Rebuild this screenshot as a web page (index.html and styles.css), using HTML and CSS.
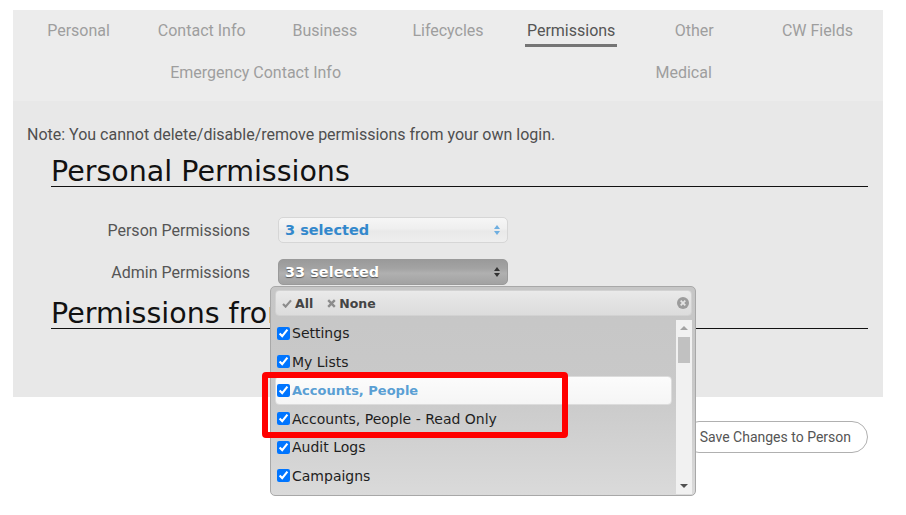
FILE: index.html
```html
<!DOCTYPE html>
<html lang="en">
<head>
<meta charset="utf-8">
<title>Permissions</title>
<link rel="stylesheet" href="styles.css">
</head>
<body>
<div class="panel">
  <nav class="tabs">
    <div class="tab-row tab-row-main">
      <a class="tab"><span>Personal</span></a>
      <a class="tab"><span>Contact Info</span></a>
      <a class="tab"><span>Business</span></a>
      <a class="tab"><span>Lifecycles</span></a>
      <a class="tab active"><span>Permissions</span></a>
      <a class="tab"><span>Other</span></a>
      <a class="tab"><span>CW Fields</span></a>
    </div>
    <div class="tab-row tab-row-extra">
      <a class="tab"><span>Emergency Contact Info</span></a>
      <a class="tab"><span>Medical</span></a>
    </div>
  </nav>
  <div class="content">
    <p class="note">Note: You cannot delete/disable/remove permissions from your own login.</p>
    <h2 class="section-title">Personal Permissions</h2>
    <div class="form-grid">
      <label class="field-label">Person Permissions</label>
      <div class="ms-wrap">
        <button class="ms"><span>3 selected</span>
          <svg class="ms-arrows" width="6" height="10" viewBox="0 0 6 10"><path d="M0 4 L3 0 L6 4 Z M0 6 L3 10 L6 6 Z" fill="#6eaee0"/></svg>
        </button>
      </div>
      <label class="field-label">Admin Permissions</label>
      <div class="ms-wrap">
        <button class="ms ms-open"><span>33 selected</span>
          <svg class="ms-arrows" width="6" height="10" viewBox="0 0 6 10"><path d="M0 4 L3 0 L6 4 Z M0 6 L3 10 L6 6 Z" fill="#333"/></svg>
        </button>
        <div class="ms-menu">
          <div class="ms-header">
            <div class="ms-links">
              <span class="ms-link">
                <svg width="10" height="9" viewBox="0 0 10 9"><path d="M1 5 L3.6 7.6 L9 1.4" fill="none" stroke="#8c8c8c" stroke-width="2.2"/></svg>
                All
              </span>
              <span class="ms-link">
                <svg width="9" height="9" viewBox="0 0 9 9"><path d="M1.2 1.2 L7.8 7.8 M7.8 1.2 L1.2 7.8" fill="none" stroke="#8c8c8c" stroke-width="2.4"/></svg>
                None
              </span>
            </div>
            <svg class="ms-close" width="12" height="12" viewBox="0 0 12 12"><circle cx="6" cy="6" r="6" fill="#9c9c9c"/><path d="M3.7 3.7 L8.3 8.3 M8.3 3.7 L3.7 8.3" stroke="#e4e4e4" stroke-width="1.8"/></svg>
          </div>
          <div class="ms-body">
            <ul class="ms-list">
              <li class="ms-item"><input type="checkbox" checked><span>Settings</span></li>
              <li class="ms-item"><input type="checkbox" checked><span>My Lists</span></li>
              <li class="ms-item hover"><input type="checkbox" checked><span>Accounts, People</span></li>
              <li class="ms-item"><input type="checkbox" checked><span>Accounts, People - Read Only</span></li>
              <li class="ms-item"><input type="checkbox" checked><span>Audit Logs</span></li>
              <li class="ms-item"><input type="checkbox" checked><span>Campaigns</span></li>
            </ul>
            <div class="scrollbar">
              <div class="sb-btn"><span class="tri-up"></span></div>
              <div class="sb-track"><div class="sb-thumb"></div></div>
              <div class="sb-btn"><span class="tri-down"></span></div>
            </div>
          </div>
        </div>
      </div>
    </div>
    <h2 class="section-title"><span class="clip">Permissions from Groups</span></h2>
  </div>
</div>
<div class="actions">
  <button class="save-btn">Save Changes to Person</button>
</div>
<div class="annotation"></div>
</body>
</html>
```

FILE: styles.css
```css
* { box-sizing: border-box; }

body {
  margin: 0;
  background: #fff;
  font-family: Roboto, "Liberation Sans", sans-serif;
  position: relative;
  width: 906px;
  height: 515px;
  overflow: hidden;
}

.panel {
  margin: 10px 0 0 13px;
  width: 870px;
}

/* Tabs */
.tabs {
  background: #ececec;
  padding-top: 9px;
  height: 91px;
}

.tab-row {
  height: 42px;
}

.tab-row-main {
  display: grid;
  grid-template-columns: repeat(7, 1fr);
  padding: 0 4px;
}

.tab-row-extra {
  display: flex;
  justify-content: space-around;
  padding-right: 14px;
}

.tab {
  text-align: center;
  font-size: 16px;
  line-height: 24px;
  color: #9e9e9e;
}

.tab span {
  display: inline-block;
}

.tab.active {
  color: #555;
}

.tab.active span {
  padding: 0 2px 1px;
  border-bottom: 3px solid #757575;
  background-clip: content-box;
}

/* Content */
.content {
  background: #e8e8e8;
  padding: 24px 15px 68px 14px;
}

.note {
  margin: 0;
  font-size: 16px;
  line-height: 20px;
  color: #4f4f4f;
}

.section-title {
  margin: 13px 0 0 24px;
  font-family: "DejaVu Sans", sans-serif;
  font-weight: normal;
  font-size: 28.5px;
  line-height: 28px;
  color: #111;
  border-bottom: 1px solid #111;
  white-space: nowrap;
}

.clip {
  display: block;
  width: 219px;
  overflow: hidden;
}

.form-grid {
  margin: 30px 0 15px 24px;
  display: grid;
  grid-template-columns: 199px 230px;
  column-gap: 28px;
  row-gap: 16px;
  align-items: center;
}

.field-label {
  text-align: right;
  font-size: 16px;
  color: #555;
}

.ms-wrap {
  position: relative;
}

.ms {
  width: 230px;
  height: 26px;
  display: flex;
  align-items: center;
  justify-content: space-between;
  padding: 0 7px 0 6px;
  border: 1px solid #d6d6d6;
  border-radius: 5px;
  background: linear-gradient(#f6f6f6, #efefef 45%, #e9e9e9 55%, #eeeeee);
  font-family: "DejaVu Sans", sans-serif;
  font-weight: bold;
  font-size: 14.5px;
  color: #3388cc;
  cursor: pointer;
}

.ms-open {
  border-color: #9a9a9a;
  background: linear-gradient(#9a9a9a, #a3a3a3 35%, #b0b0b0 55%, #a2a2a2);
  color: #fff;
  text-shadow: 0 1px 1px #555;
}

/* Dropdown menu */
.ms-menu {
  position: absolute;
  left: -8px;
  top: 27px;
  width: 426px;
  height: 210px;
  z-index: 5;
  border: 1px solid #a8a8a8;
  border-radius: 5px;
  padding: 3px 3px 0 4px;
  background: linear-gradient(#c6c6c6, #c9c9c9 50%, #dadada);
  font-family: "DejaVu Sans", sans-serif;
}

.ms-header {
  height: 26px;
  display: flex;
  align-items: center;
  justify-content: space-between;
  padding: 0 2px 0 6px;
  border: 1px solid #d2d2d2;
  border-radius: 4px;
  background: linear-gradient(#eaeaea, #e2e2e2 50%, #dcdcdc);
}

.ms-links {
  display: flex;
  gap: 14px;
}

.ms-link {
  display: flex;
  align-items: center;
  gap: 3px;
  font-weight: bold;
  font-size: 12.5px;
  color: #444;
}

.ms-body {
  display: flex;
  gap: 4px;
  margin-top: 3px;
  height: 176px;
}

.ms-list {
  list-style: none;
  margin: 0;
  padding: 0;
  width: 397px;
}

.ms-item {
  height: 28.5px;
  display: flex;
  align-items: center;
  gap: 2px;
  padding-left: 1px;
  border: 1px solid transparent;
  border-radius: 4px;
  font-size: 14px;
  color: #1e1e1e;
}

.ms-item input {
  margin: 0;
  width: 13px;
  height: 13px;
}

.ms-item.hover {
  background: linear-gradient(#fcfcfc, #f5f5f5);
  border-color: #dcdcdc;
  color: #5a9fd4;
  font-weight: bold;
  font-size: 13px;
}

.scrollbar {
  width: 16px;
  margin-top: 1px;
  height: 174px;
  background: #f1f1f1;
  display: flex;
  flex-direction: column;
}

.sb-btn {
  height: 16px;
  display: flex;
  align-items: center;
  justify-content: center;
}

.sb-track {
  flex: 1;
  padding: 1px 2px 0;
}

.sb-thumb {
  height: 26px;
  background: #c1c1c1;
}

.tri-up {
  width: 0;
  height: 0;
  border-left: 4px solid transparent;
  border-right: 4px solid transparent;
  border-bottom: 4px solid #a3a3a3;
}

.tri-down {
  width: 0;
  height: 0;
  border-left: 4px solid transparent;
  border-right: 4px solid transparent;
  border-top: 4px solid #505050;
}

/* Actions */
.actions {
  display: flex;
  justify-content: flex-end;
  padding-right: 38px;
  margin-top: 24px;
}

.save-btn {
  height: 32px;
  padding: 0 16px;
  border: 1px solid #b0b0b0;
  border-radius: 16px;
  background: #fff;
  font-family: Roboto, "Liberation Sans", sans-serif;
  font-size: 14px;
  color: #555;
}

/* Red annotation box */
.annotation {
  position: absolute;
  left: 262px;
  top: 372px;
  width: 306px;
  height: 66px;
  border: 6px solid #ff0000;
  border-radius: 4px;
  z-index: 10;
}
```
